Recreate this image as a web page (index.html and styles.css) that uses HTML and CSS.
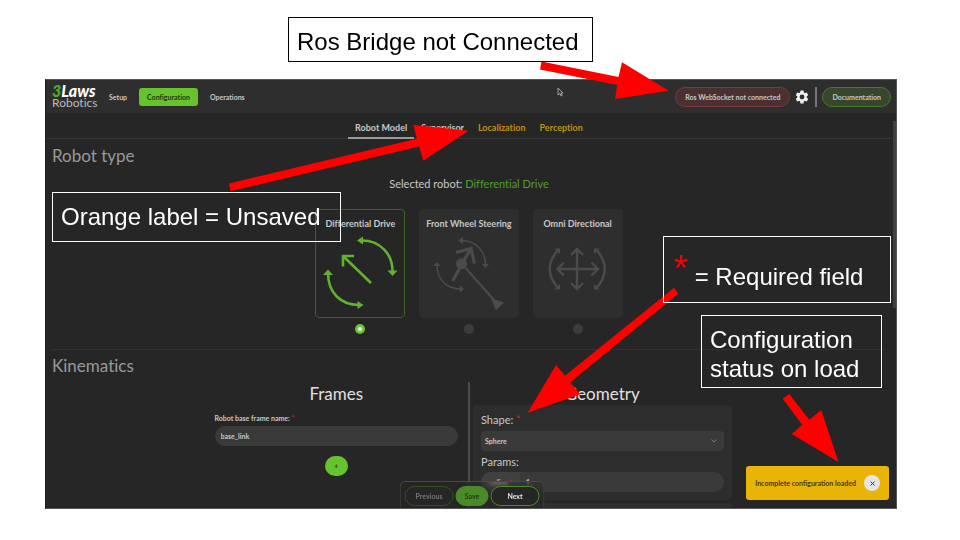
FILE: index.html
```
<!DOCTYPE html>
<html lang="en">
<head>
<meta charset="utf-8">
<title>3Laws Robotics - Configuration</title>
<link rel="stylesheet" href="styles.css">
</head>
<body>
<div class="slide">
  <div class="app">
    <header class="topbar">
      <a class="logo" href="#"><span class="logo-top"><span class="logo-three">3</span>Laws</span><span class="logo-bottom">Robotics</span></a>
      <nav class="mainnav">
        <a href="#">Setup</a>
        <a class="current" href="#">Configuration</a>
        <a href="#">Operations</a>
      </nav>
      <div class="tools">
        <span class="status">Ros WebSocket not connected</span>
        <button class="gear" type="button" aria-label="Settings">
          <svg width="16" height="16" viewBox="0 0 24 24"><path fill="#f2f2f2" d="M19.14 12.94c.04-.3.06-.61.06-.94 0-.32-.02-.64-.07-.94l2.03-1.58a.49.49 0 0 0 .12-.61l-1.92-3.32a.49.49 0 0 0-.59-.22l-2.39.96c-.5-.38-1.03-.7-1.62-.94l-.36-2.54a.48.48 0 0 0-.48-.41h-3.84c-.24 0-.43.17-.47.41l-.36 2.54c-.59.24-1.13.57-1.62.94l-2.39-.96a.48.48 0 0 0-.59.22L2.74 8.87c-.12.21-.08.47.12.61l2.03 1.58c-.05.3-.09.63-.09.94s.02.64.07.94l-2.03 1.58a.49.49 0 0 0-.12.61l1.92 3.32c.12.22.37.29.59.22l2.39-.96c.5.38 1.03.7 1.62.94l.36 2.54c.05.24.24.41.48.41h3.84c.24 0 .44-.17.47-.41l.36-2.54c.59-.24 1.13-.56 1.62-.94l2.39.96c.22.08.47 0 .59-.22l1.92-3.32a.48.48 0 0 0-.12-.61zM12 15.6A3.6 3.6 0 1 1 12 8.400a3.6 3.6 0 0 1 0 7.200z"/></svg>
        </button>
        <span class="bar"></span>
        <a class="docs" href="#">Documentation</a>
      </div>
      <svg class="pointer" width="7" height="10" viewBox="0 0 7 10"><path d="M1 1v7l2-1.500 1 2.500 1.200-.6-1-2.400H6z" fill="#333" stroke="#bbb" stroke-width=".8"/></svg>
    </header>

    <main class="content">
      <nav class="tabs">
        <a class="active" href="#">Robot Model</a>
        <a href="#">Supervisor</a>
        <a class="unsaved" href="#">Localization</a>
        <a class="unsaved" href="#">Perception</a>
      </nav>

      <section class="type">
        <h2>Robot type</h2>
        <p class="selected">Selected robot: <span>Differential Drive</span></p>
        <div class="choices">
          <label class="choice">
            <span class="card picked">
              <span>Differential Drive</span>
              <svg width="76" height="78" viewBox="321 231 76 78" fill="none" stroke="#5fb42c" stroke-width="2.600">
                <path d="M361 240.500C379 240.500 391.500 254 391.500 271"/>
                <path d="M327 273C327 293 340 305 358 305"/>
                <path d="M370 283L343 257M342 266.500v-10.500h11"/>
                <path fill="#5fb42c" stroke="none" d="M356 240.500l6-4v8zM391.500 276l-5-5.500h10zM327 269.500l-5 5.500h10zM362.500 305l-6-4v8z"/>
              </svg>
            </span>
            <input type="radio" name="robot" checked>
          </label>
          <label class="choice">
            <span class="card">
              <span>Front Wheel Steering</span>
              <svg width="76" height="78" viewBox="431 231 76 78" fill="none" stroke="#4b4b4b" stroke-width="1.500">
                <path d="M461 240.500C476 240.500 485.500 251 485.500 265"/>
                <path d="M437 265C437 280 447 289 461 289"/>
                <path stroke-width="3.200" d="M452.500 281L470.500 249M456 252.500l15-4 3.500 15"/>
                <path stroke-width="2" d="M462 264l32 36"/>
                <circle cx="461.500" cy="263.700" r="5.500" fill="#4b4b4b" stroke="none"/>
                <path fill="#4b4b4b" stroke="none" d="M491 298.500l13 4-8 8zM458 240.500l5-3.500v7zM485.500 268l-3.500-4h7zM437 262l-3.500 4h7zM464 289l-4-3.500v7z"/>
              </svg>
            </span>
            <input type="radio" name="robot">
          </label>
          <label class="choice">
            <span class="card">
              <span>Omni Directional</span>
              <svg width="76" height="78" viewBox="540 231 76 78" fill="none" stroke="#4b4b4b" stroke-width="2.400">
                <path d="M557.500 269h41M577 248.500v41M571 255l6-6 6 6M571 283l6 6 6-6M564 262.500l-6.500 6.500 6.500 6.500M591.500 262.500l6.500 6.500-6.500 6.500"/>
                <path d="M557.500 250.500Q542 269 557.500 287.500M597 250.500Q612.500 269 597 287.500"/>
                <path fill="#4b4b4b" stroke="none" d="M554.500 248.500h5.500v5.500zM554.500 289.500h5.500v-5.500zM599.500 248.500H594v5.500zM599.500 289.500H594v-5.500z"/>
              </svg>
            </span>
            <input type="radio" name="robot">
          </label>
        </div>
      </section>

      <section class="kinematics">
        <h2>Kinematics</h2>
        <div class="columns">
          <div class="frames">
            <h3>Frames</h3>
            <label class="small" for="base">Robot base frame name: <i>*</i></label>
            <input class="text" id="base" type="text" value="base_link">
            <button class="add" type="button">+</button>
          </div>
          <div class="rule"></div>
          <div class="geometry">
            <h3>Geometry</h3>
            <div class="panel">
              <label for="shape">Shape: <i>*</i></label>
              <div class="pick">
                <select id="shape"><option>Sphere</option></select>
                <svg width="6" height="4" viewBox="0 0 6 4"><path d="M.5.500L3 3 5.500.500" fill="none" stroke="#7a7a7a"/></svg>
              </div>
              <p>Params:</p>
              <div class="param">
                <label for="radius">radius <i>*</i></label>
                <input id="radius" type="text" value="1">
              </div>
            </div>
            <div class="panel"></div>
          </div>
        </div>
      </section>
    </main>

    <div class="scroll"></div>
    <div class="steps">
      <button class="prev" type="button">Previous</button>
      <button class="save" type="button">Save</button>
      <button class="next" type="button">Next</button>
    </div>
    <div class="toast" role="status">
      <span>Incomplete configuration loaded</span>
      <button type="button" aria-label="Close"><svg width="5" height="5" viewBox="0 0 5 5"><path d="M.5.500l4 4M4.500.500l-4 4" stroke="#333"/></svg></button>
    </div>
  </div>

  <svg class="arrows" width="960" height="540" viewBox="0 0 960 540" fill="#f00">
    <path d="M541.500 61.500L618.500 77 622 62.300 668.700 90.800 615 99 617.300 85 540 69.500z"/>
    <path d="M229 183.500L417 138.700 413.300 125 468.500 130.700 423.300 160.700 419 146.500 230.500 191.300z"/>
    <path d="M674 287.700L565 375.700 556 365 527.700 412.700 580.300 394.300 570.300 382.300 678.300 293.700z"/>
    <path d="M782.700 398.700L802.300 424.700 791.700 434 838.500 462 821.300 410 809.300 419.700 789.300 394z"/>
  </svg>
  <p class="note note-bridge">Ros Bridge not Connected</p>
  <p class="note note-orange">Orange label = Unsaved</p>
  <p class="note note-required"><b>*</b> = Required field</p>
  <p class="note note-status">Configuration status on load</p>
</div>
</body>
</html>
```
FILE: styles.css
```
* {
  box-sizing: border-box;
}

body {
  margin: 0;
  background: #fff;
  font-family: Lato, "Liberation Sans", sans-serif;
  font-variant-ligatures: none;
}

a {
  color: inherit;
  text-decoration: none;
}

h2, h3, p {
  margin: 0;
  font-weight: 400;
}

i {
  color: #b03030;
  font-style: normal;
}

button, input, select {
  font-family: inherit;
  font-size: 7px;
  font-weight: 700;
  border: 0;
  margin: 0;
  padding: 0;
}

.slide {
  position: relative;
  height: 100vh;
  padding: 79px 63px 31px 45px;
  overflow: hidden;
}

.app {
  position: relative;
  display: flex;
  flex-direction: column;
  height: 100%;
  overflow: hidden;
  background: #262626;
  border: 1px solid #555;
  border-left-color: #1c1c1c;
  color: #c8c8c8;
}

/* Top bar */
.topbar {
  position: relative;
  flex: none;
  display: flex;
  align-items: center;
  height: 33px;
  padding: 0 5px 0 6px;
  background: #2e2e2e;
  font-size: 7px;
  font-weight: 700;
}

.logo {
  display: flex;
  flex-direction: column;
  width: 45px;
  line-height: 12px;
}

.logo-top {
  color: #fff;
  font-size: 16px;
  font-weight: 900;
  font-style: italic;
}

.logo-three {
  color: #4caf20;
}

.logo-bottom {
  color: #bbb;
  font-size: 12px;
  font-weight: 400;
}

.mainnav {
  display: flex;
  gap: 4px;
  margin-left: 4px;
}

.mainnav a {
  padding: 0 8px;
  line-height: 18px;
  border-radius: 3px;
}

.mainnav .current {
  background: #66c32e;
  color: #1f3a10;
}

.tools {
  display: flex;
  align-items: center;
  margin-left: auto;
}

.status, .docs {
  padding: 0 9px;
  line-height: 18px;
  border: 1px solid #7c3a3a;
  border-radius: 10px;
  background: #4a3030;
}

.docs {
  border-color: #47782b;
  background: #37472e;
}

.gear {
  display: flex;
  margin: 0 5px 0 4px;
  background: none;
}

.bar {
  width: 2px;
  height: 20px;
  margin-right: 5px;
  background: #777;
}

.pointer {
  position: absolute;
  left: 511px;
  top: 7px;
}

/* Page content */
.content {
  flex: 1;
  min-height: 0;
  overflow: hidden;
  padding-right: 4px;
}

.tabs {
  display: flex;
  justify-content: center;
  padding-top: 5px;
  border-bottom: 1px solid #363636;
  font-size: 9px;
  font-weight: 700;
}

.tabs a {
  margin-bottom: -1px;
  padding: 0 7px;
  line-height: 19px;
  border-bottom: 2px solid transparent;
}

.tabs .active {
  border-bottom-color: #999;
}

.tabs .unsaved {
  color: #c0900f;
}

.type, .kinematics {
  padding: 6px 6px 0;
}

h2 {
  color: #999;
  font-size: 17px;
  line-height: 22px;
}

.selected {
  margin-top: 9px;
  font-size: 11px;
  line-height: 16px;
  text-align: center;
}

.selected span {
  color: #4f9e27;
}

.choices {
  display: flex;
  justify-content: center;
  gap: 14px;
  padding: 17px 0 15px;
  border-bottom: 1px solid #323232;
}

.choice {
  display: flex;
  flex-direction: column;
  align-items: center;
  gap: 6px;
}

.card {
  display: flex;
  flex-direction: column;
  align-items: center;
  gap: 1px;
  padding: 8px 6px;
  border: 1px solid #2e2e2e;
  border-radius: 4px;
  background: #2e2e2e;
  font-size: 9px;
  font-weight: 700;
  line-height: 12px;
}

.card svg {
  overflow: visible;
}

.picked {
  border-color: #3a6424;
  background: #262626;
}

.choice input {
  appearance: none;
  width: 10px;
  height: 10px;
  border-radius: 50%;
  background: #3c3c3c;
}

.choice input:checked {
  background: radial-gradient(#fff 1px, #66c32e 3px);
}

.columns {
  display: grid;
  grid-template-columns: 1fr 2px 1fr;
  gap: 3px;
  max-width: 525px;
  margin: 5px auto 0;
}

.kinematics {
  padding-top: 5px;
}

h3 {
  color: #e0e0e0;
  font-size: 17px;
  line-height: 23px;
  text-align: center;
}

.rule {
  background: #4c4c4c;
}

.frames {
  display: flex;
  flex-direction: column;
  padding: 0 7px 0 8px;
}

.small {
  margin-top: 8px;
  font-size: 7px;
  font-weight: 700;
  line-height: 10px;
}

.text {
  width: 100%;
  height: 20px;
  margin-top: 3px;
  padding: 0 6px;
  border-radius: 10px;
  background: #3a3a3a;
  color: #c8c8c8;
}

.add {
  align-self: center;
  width: 23px;
  height: 20px;
  margin-top: 10px;
  border-radius: 10px;
  background: #66c32e;
  color: #1f3a10;
}

.panel {
  min-height: 30px;
  margin-bottom: 3px;
  padding: 8px;
  border-radius: 4px;
  background: #2d2d2d;
  font-size: 11px;
  line-height: 14px;
}

.panel > label {
  display: block;
}

.pick {
  position: relative;
  margin: 4px 0;
}

.pick select {
  appearance: none;
  display: block;
  width: 100%;
  height: 20px;
  padding: 0 4px;
  border-radius: 4px;
  background: #3a3a3a;
  color: #c8c8c8;
}

.pick svg {
  position: absolute;
  right: 7px;
  top: 8px;
}

.param {
  display: flex;
  height: 20px;
  margin-top: 3px;
  border-radius: 10px;
  overflow: hidden;
  background: #3a3a3a;
  font-size: 7px;
  font-weight: 700;
  line-height: 20px;
}

.param label {
  width: 39px;
  background: #404040;
  text-align: center;
}

.param input {
  flex: 1;
  min-width: 0;
  padding: 0 6px;
  background: none;
  color: #c8c8c8;
}

/* Floating parts */
.scroll {
  position: absolute;
  right: 0;
  top: 41px;
  width: 3px;
  height: 187px;
  background: #404040;
}

.steps {
  position: absolute;
  left: 50%;
  bottom: -1px;
  display: flex;
  gap: 2px;
  padding: 4px 4px 3px;
  border: 1px solid #484848;
  border-bottom: 0;
  border-radius: 6px 6px 0 0;
  background: rgba(38, 38, 38, 0.4);
  backdrop-filter: blur(2px);
  transform: translateX(-50%);
  margin-left: 1px;
}

.steps button {
  width: 49px;
  height: 20px;
  border: 1px solid #4a8a28;
  border-radius: 10px;
  background: #262626;
  color: #e5e5e5;
}

.steps .prev {
  border-color: #33501f;
  color: #777;
}

.steps .save {
  width: 33px;
  background: #4a8a28;
  color: #1f3a10;
}

.toast {
  position: absolute;
  right: 7px;
  bottom: 8px;
  display: flex;
  align-items: center;
  gap: 8px;
  height: 34px;
  padding: 0 9px;
  border-radius: 3px;
  background: #eab308;
  color: #4a390a;
  font-size: 7px;
  font-weight: 700;
}

.toast button {
  display: flex;
  align-items: center;
  justify-content: center;
  width: 16px;
  height: 16px;
  border-radius: 50%;
  background: #e5e5e5;
}

/* Annotations laid over the window */
.arrows {
  position: absolute;
  left: 0;
  top: 0;
}

.note {
  position: absolute;
  padding: 9px 8px;
  border: 1px solid #fff;
  color: #fff;
  font-family: "Liberation Sans", Arial, sans-serif;
  font-size: 24px;
  line-height: 29px;
}

.note-bridge {
  left: 288px;
  top: 17px;
  width: 305px;
  height: 45px;
  border-color: #000;
  color: #000;
}

.note-orange {
  left: 52px;
  top: 192px;
  width: 289px;
  height: 50px;
}

.note-required {
  left: 663px;
  top: 236px;
  width: 228px;
  height: 67px;
  padding: 24px 10px;
}

.note-required b {
  color: #f00;
  font-size: 36px;
  font-weight: 400;
  line-height: 16px;
  vertical-align: 4px;
}

.note-status {
  left: 701px;
  top: 315px;
  width: 181px;
  height: 73px;
}
```
